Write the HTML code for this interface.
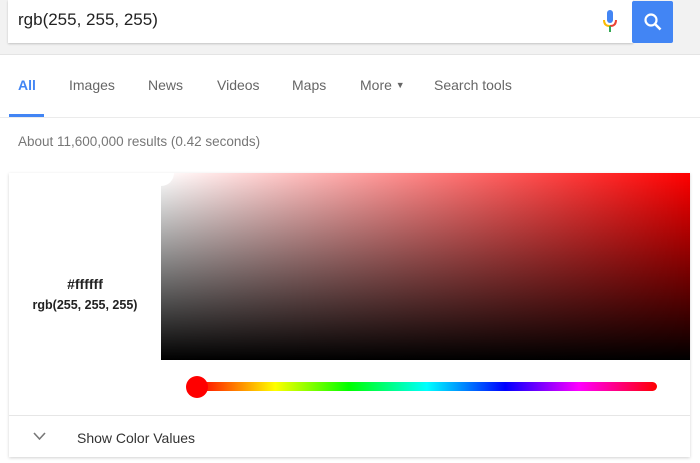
<!DOCTYPE html>
<html><head><style>
*{margin:0;padding:0;box-sizing:border-box}
body{width:700px;height:463px;overflow:hidden;background:#fff;font-family:"Liberation Sans",Arial,sans-serif;position:relative}
.top{position:absolute;left:0;top:0;width:700px;height:55px;background:#f2f2f2;border-bottom:1px solid #e4e4e4}
.box{position:absolute;left:8px;top:0;width:625px;height:43px;background:#fff;box-shadow:0 1px 2px rgba(0,0,0,.2)}
.q{position:absolute;left:18px;top:10px;font-size:17px;color:#222}
.btn{position:absolute;left:632px;top:1px;width:41px;height:42px;background:#4285f4;border-radius:2px}
.tab{position:absolute;top:77px;font-size:14px;color:#666}
.ul{position:absolute;left:9px;top:114px;width:35px;height:3px;background:#4285f4}
.line{position:absolute;left:0;top:117px;width:700px;height:1px;background:#ebebeb}
.res{position:absolute;left:18px;top:134px;font-size:13.5px;color:#777}
.card{position:absolute;left:9px;top:173px;width:681px;height:284px;background:#fff;box-shadow:0 1px 3px rgba(0,0,0,.18)}
.grad{position:absolute;left:161px;top:173px;width:529px;height:187px;background:linear-gradient(to top,#000,rgba(0,0,0,0)),linear-gradient(to right,#fff,#f00);overflow:hidden}
.knob{position:absolute;left:-13px;top:-13px;width:26px;height:26px;border-radius:50%;background:#fff}
.hue{position:absolute;left:197px;top:382px;width:460px;height:9px;border-radius:5px;background:linear-gradient(to right,#f00,#ff0 17%,#0f0 33%,#0ff 50%,#00f 67%,#f0f 83%,#f00)}
.thumb{position:absolute;left:186px;top:376px;width:22px;height:22px;border-radius:50%;background:#f00}
.div{position:absolute;left:9px;top:415px;width:681px;height:1px;background:#e6e6e6}
</style></head><body>
<div class="top"></div>
<div class="box"></div>
<div class="q">rgb(255, 255, 255)</div>
<svg style="position:absolute;left:602px;top:10px" width="16" height="24" viewBox="0 0 16 24"><rect x="5" y="0" width="6" height="13" rx="3" fill="#4285f4"/><path d="M2 10 Q2 16 8 16" stroke="#fbbc05" stroke-width="2" fill="none"/><path d="M14 10 Q14 16 8 16" stroke="#ea4335" stroke-width="2" fill="none"/><rect x="7" y="16" width="2" height="6" fill="#34a853"/></svg>
<div class="btn"><svg style="position:absolute;left:11px;top:11px" width="20" height="20" viewBox="0 0 20 20"><circle cx="8" cy="8" r="5.5" stroke="#fff" stroke-width="2.2" fill="none"/><path d="M12 12 L17.5 17.5" stroke="#fff" stroke-width="2.6"/></svg></div>
<div class="tab" style="left:18px;color:#4285f4;font-weight:bold">All</div>
<div class="tab" style="left:69px">Images</div>
<div class="tab" style="left:148px">News</div>
<div class="tab" style="left:217px">Videos</div>
<div class="tab" style="left:292px">Maps</div>
<div class="tab" style="left:360px">More <span style="font-size:9px;position:relative;top:-2px">▼</span></div>
<div class="tab" style="left:434px">Search tools</div>
<div class="line"></div><div class="ul"></div>
<div class="res">About 11,600,000 results (0.42 seconds)</div>
<div class="card"></div>
<div class="grad"><div class="knob"></div></div>
<div style="position:absolute;left:9px;top:276px;width:152px;text-align:center;font-weight:bold;font-size:14px;color:#222">#ffffff</div>
<div style="position:absolute;left:9px;top:298px;width:152px;text-align:center;font-weight:bold;font-size:12.5px;color:#222">rgb(255, 255, 255)</div>
<div class="hue"></div><div class="thumb"></div>
<div class="div"></div>
<svg style="position:absolute;left:33px;top:432px" width="13" height="9" viewBox="0 0 13 9"><path d="M1 1 L6.5 7 L12 1" stroke="#777" stroke-width="1.6" fill="none"/></svg>
<div style="position:absolute;left:77px;top:430px;font-size:14px;color:#333">Show Color Values</div>
</body></html>
